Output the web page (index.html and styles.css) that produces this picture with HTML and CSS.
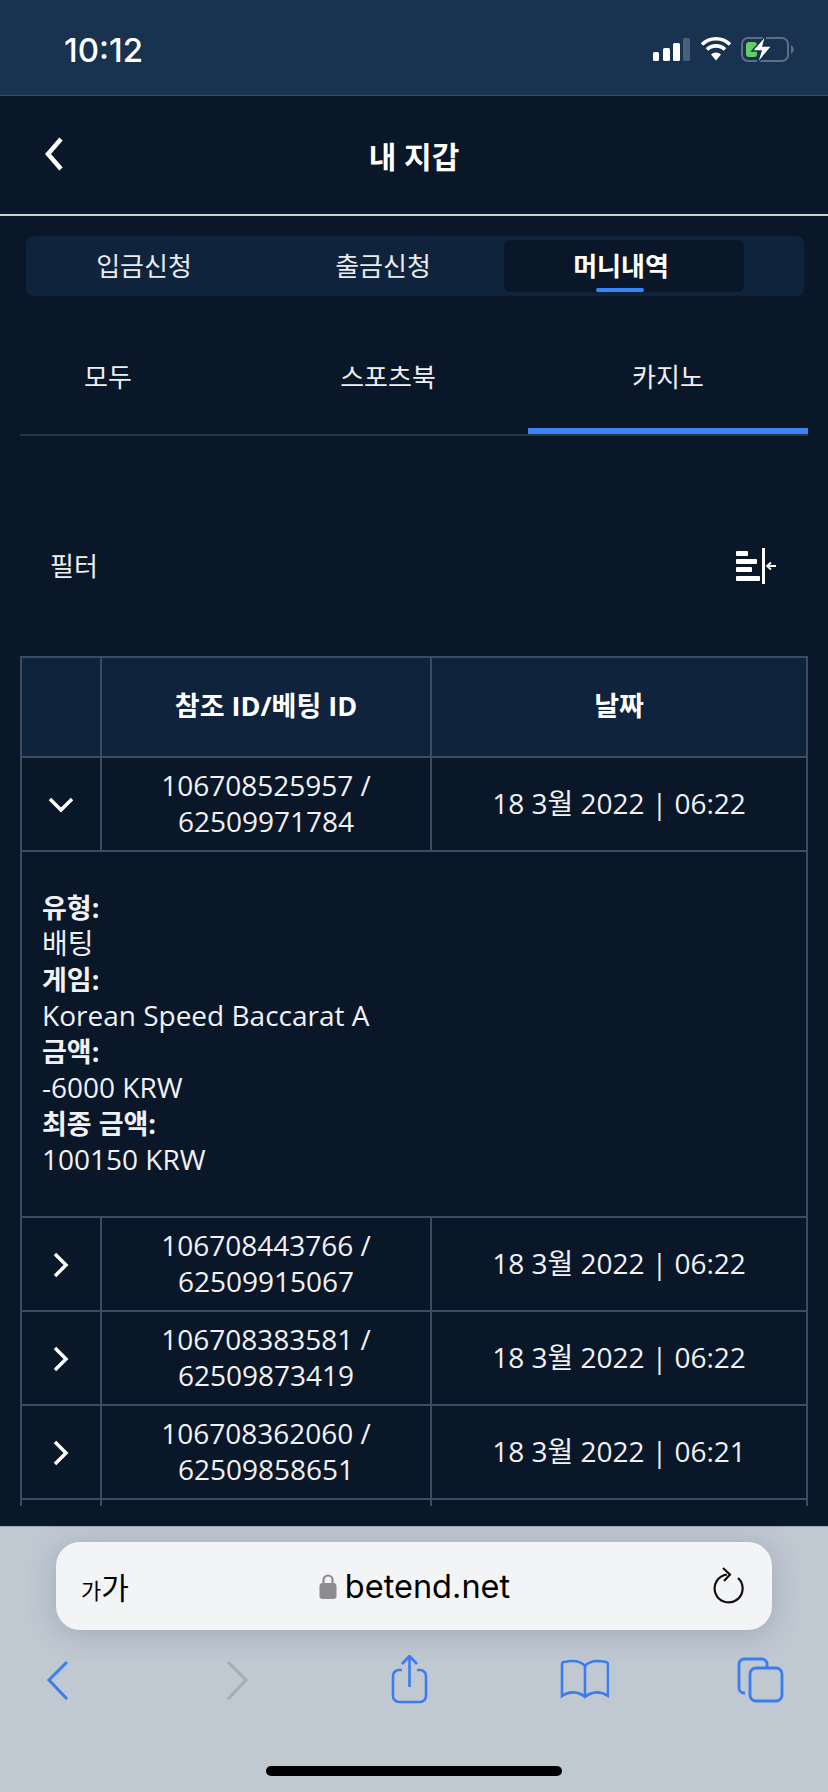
FILE: index.html
```html
<!DOCTYPE html>
<html lang="ko">
<head>
  <meta charset="UTF-8" />
  <meta name="viewport" content="width=device-width, initial-scale=1.0" />
  <title>내 지갑</title>
  <link rel="stylesheet" href="styles.css">
</head>
<body>
  <div class="screen">
    <div class="status-bar">
      <span class="time">10:12</span>
      <svg class="status-icons" width="144" height="30" viewBox="650 35 144 30">
        <rect x="653" y="52" width="6" height="9" rx="1.5" fill="#fff"/>
        <rect x="663" y="48" width="7" height="13" rx="1.5" fill="#fff"/>
        <rect x="673" y="43" width="7" height="18" rx="1.5" fill="#fff"/>
        <rect x="683" y="38" width="7" height="23" rx="1.5" fill="#4a5f78"/>
        <path d="M702 44.5a20 20 0 0 1 28 0M707 49.5a13 13 0 0 1 18 0" fill="none" stroke="#fff" stroke-width="3.6"/>
        <path d="M711 54.5a7 7 0 0 1 10 0L716 60.5z" fill="#fff"/>
        <rect x="742" y="38" width="46" height="23" rx="6" fill="none" stroke="#5d6f84" stroke-width="2"/>
        <path d="M791 45a5 5 0 0 1 0 9z" fill="#5d6f84"/>
        <rect x="746" y="42" width="11" height="15" rx="3" fill="#63cf62"/>
        <path d="M766 35L752 51h9l-4 13 15-18h-9z" fill="#fff" stroke="#19324f" stroke-width="1.500"/>
      </svg>
    </div>

    <header class="page-header">
      <svg class="back-icon" width="24" height="36" viewBox="0 0 24 36">
        <path d="M19 3L6 18l13 15" fill="none" stroke="#fff" stroke-width="4.500"/>
      </svg>
      <h1>내 지갑</h1>
    </header>

    <main class="wallet">
      <div class="sub-tabs">
        <a class="sub-tab">입금신청</a>
        <a class="sub-tab">출금신청</a>
        <a class="sub-tab active">머니내역</a>
      </div>

      <div class="cat-tabs">
        <a class="cat-tab first">모두</a>
        <a class="cat-tab">스포츠북</a>
        <a class="cat-tab active">카지노</a>
      </div>

      <div class="filter-row">
        <span>필터</span>
        <svg width="44" height="38" viewBox="0 0 44 38">
          <rect x="0" y="3" width="12" height="5" rx="1" fill="#fff"/>
          <rect x="0" y="11" width="21" height="5" rx="1" fill="#fff"/>
          <rect x="0" y="19" width="16" height="5" rx="1" fill="#fff"/>
          <rect x="0" y="28" width="24" height="5" rx="1" fill="#fff"/>
          <rect x="26" y="0" width="3" height="36" fill="#fff"/>
          <path d="M31 18h9M35 14.500l-4 3.500 4 3.500" fill="none" stroke="#fff" stroke-width="1.800"/>
        </svg>
      </div>

      <div class="table-wrap">
        <table>
          <colgroup>
            <col class="col-toggle" />
            <col class="col-id" />
            <col class="col-date" />
          </colgroup>
          <thead>
            <tr>
              <th></th>
              <th>참조 ID/베팅 ID</th>
              <th>날짜</th>
            </tr>
          </thead>
          <tbody>
            <tr>
              <td>
                <svg class="toggle" width="30" height="30" viewBox="0 0 30 30"><path d="M4 9l11 11 11-11" fill="none" stroke="#fff" stroke-width="3.500"/></svg>
              </td>
              <td>106708525957 /<br>62509971784</td>
              <td>18 3월 2022 | 06:22</td>
            </tr>
            <tr>
              <td colspan="3" class="detail">
                <b>유형:</b><br>배팅<br>
                <b>게임:</b><br>Korean Speed Baccarat A<br>
                <b>금액:</b><br>-6000 KRW<br>
                <b>최종 금액:</b><br>100150 KRW
              </td>
            </tr>
            <tr>
              <td>
                <svg class="toggle" width="30" height="30" viewBox="0 0 30 30"><path d="M9 4l11 11-11 11" fill="none" stroke="#fff" stroke-width="3.500"/></svg>
              </td>
              <td>106708443766 /<br>62509915067</td>
              <td>18 3월 2022 | 06:22</td>
            </tr>
            <tr>
              <td>
                <svg class="toggle" width="30" height="30" viewBox="0 0 30 30"><path d="M9 4l11 11-11 11" fill="none" stroke="#fff" stroke-width="3.500"/></svg>
              </td>
              <td>106708383581 /<br>62509873419</td>
              <td>18 3월 2022 | 06:22</td>
            </tr>
            <tr>
              <td>
                <svg class="toggle" width="30" height="30" viewBox="0 0 30 30"><path d="M9 4l11 11-11 11" fill="none" stroke="#fff" stroke-width="3.500"/></svg>
              </td>
              <td>106708362060 /<br>62509858651</td>
              <td>18 3월 2022 | 06:21</td>
            </tr>
            <tr>
              <td class="cut-row"></td>
              <td></td>
              <td></td>
            </tr>
          </tbody>
        </table>
      </div>
    </main>

    <div class="safari-bar">
      <div class="url-bar">
        <span class="aa"><small>가</small>가</span>
        <span class="address">
          <svg width="18" height="26" viewBox="0 0 18 26">
            <path d="M4.500 11V7a4.500 4.500 0 0 1 9 0v4" fill="none" stroke="#8c8c91" stroke-width="2.200"/>
            <rect x="0.500" y="10" width="17" height="16" rx="3" fill="#8c8c91"/>
          </svg>
          betend.net
        </span>
        <svg class="reload" width="32" height="38" viewBox="0 0 32 38">
          <path d="M15 7.500A14 14 0 1 0 26 11" fill="none" stroke="#111" stroke-width="2.200"/>
          <path d="M11 1l7 6.500-6 6.500" fill="none" stroke="#111" stroke-width="2.200"/>
        </svg>
      </div>
      <nav class="safari-nav">
        <svg width="50" height="50" viewBox="0 0 50 50">
          <path d="M35 7L17 25l18 19" fill="none" stroke="#3a7df0" stroke-width="3"/>
        </svg>
        <svg width="50" height="50" viewBox="0 0 50 50">
          <path d="M20 7l18 18-18 19" fill="none" stroke="#a6acb4" stroke-width="3"/>
        </svg>
        <svg width="50" height="50" viewBox="0 0 50 50">
          <path d="M18 15h-3a6 6 0 0 0-6 6v20a6 6 0 0 0 6 6h21a6 6 0 0 0 6-6V21a6 6 0 0 0-6-6h-3M25.500 32V2M18 9l7.500-8 7.500 8" fill="none" stroke="#3a7df0" stroke-width="2.600"/>
        </svg>
        <svg width="50" height="50" viewBox="0 0 50 50">
          <path d="M26 11C22 6 14 5 5 7c-1 0-2 1-2 3v31c7-5 16-5 23 1 7-6 16-6 23-1V10c0-2-1-3-2-3-9-2-17-1-21 4zM26 11v31" fill="none" stroke="#3a7df0" stroke-width="2.600"/>
        </svg>
        <svg width="50" height="50" viewBox="0 0 50 50">
          <path d="M10 38H9a5 5 0 0 1-5-5V9a5 5 0 0 1 5-5h18a5 5 0 0 1 5 5v3" fill="none" stroke="#3a7df0" stroke-width="2.800"/>
          <rect x="15" y="13" width="32" height="33" rx="6" fill="none" stroke="#3a7df0" stroke-width="2.800"/>
        </svg>
      </nav>
      <div class="home-bar"></div>
    </div>
  </div>
</body>
</html>
```

FILE: styles.css
```css
/* General Styles */
html, body {
  margin: 0;
  padding: 0;
  background-color: #0a1728;
}

body {
  font-family: "Open Sans", "Noto Sans CJK KR", sans-serif;
  color: #fff;
}

.screen {
  width: 828px;
  height: 1792px;
  display: flex;
  flex-direction: column;
  overflow: hidden;
}

/* Status bar */
.status-bar {
  height: 95px;
  flex: none;
  display: flex;
  align-items: flex-start;
  justify-content: space-between;
  background-color: #19324f;
  border-bottom: 1px solid #3a4c60;
}

.time {
  margin: 30px 0 0 64px;
  font-family: Inter, sans-serif;
  font-size: 33px;
  line-height: 40px;
  font-weight: 500;
}

.status-icons {
  margin: 35px 34px 0 0;
}

/* Page header */
.page-header {
  height: 118px;
  flex: none;
  display: flex;
  align-items: center;
  justify-content: center;
  position: relative;
  border-bottom: 2px solid #cfd0d2;
}

.page-header h1 {
  margin: 0;
  font-size: 30px;
  font-weight: 700;
}

.back-icon {
  position: absolute;
  left: 42px;
  top: 40px;
}

/* Wallet */
.wallet {
  flex: 1;
  min-height: 0;
}

.sub-tabs {
  margin: 20px 24px 0 26px;
  height: 52px;
  padding: 4px 0;
  display: grid;
  grid-template-columns: 236px 240px 240px;
  column-gap: 1px;
  background-color: #10233d;
  border-radius: 8px;
}

.sub-tab {
  display: flex;
  align-items: center;
  justify-content: center;
  position: relative;
  padding-bottom: 2px;
  font-size: 26px;
  color: #e8ebef;
  border-radius: 6px;
}

.sub-tab.active {
  padding-right: 6px;
  background-color: #0a1728;
  color: #fff;
  font-weight: 700;
}

.sub-tab.active::after {
  content: "";
  position: absolute;
  left: 92px;
  bottom: 0;
  width: 48px;
  height: 4px;
  border-radius: 2px;
  background-color: #3a85f2;
}

.cat-tabs {
  margin: 20px 20px 0;
  display: flex;
  border-bottom: 2px solid #283545;
}

.cat-tab {
  width: 280px;
  height: 118px;
  box-sizing: border-box;
  padding-top: 8px;
  display: flex;
  align-items: center;
  justify-content: center;
  font-size: 26px;
  color: #eef0f3;
  border-bottom: 6px solid transparent;
}

.cat-tab.first {
  width: 228px;
  padding-right: 52px;
}

.cat-tab.active {
  border-bottom-color: #3a85f2;
}

.filter-row {
  margin: 60px 48px 22px 50px;
  height: 138px;
  display: flex;
  align-items: center;
  justify-content: space-between;
  font-size: 26px;
  color: #eef0f3;
}

.filter-row svg {
  margin-top: 4px;
}

/* Table Styles */
.table-wrap {
  margin: 0 20px;
  height: 850px;
  overflow: hidden;
}

table {
  width: 788px;
  table-layout: fixed;
  border-collapse: collapse;
}

.col-toggle {
  width: 80px;
}

.col-id {
  width: 330px;
}

th, td {
  border: 2px solid #3c4d63;
  text-align: center;
  font-size: 28px;
  line-height: 36px;
  color: #f0f2f5;
  padding: 9px 10px 11px;
  font-weight: 400;
}

th {
  height: 78px;
  font-size: 27px;
  font-weight: 700;
  color: #fff;
  background-color: #10233d;
}

td .toggle {
  display: block;
  margin: 3px auto 0 auto;
}

td.detail {
  text-align: left;
  padding: 37px 20px 39px;
}

td.detail b {
  font-size: 27px;
  line-height: 1;
}

td.cut-row {
  height: 72px;
}

/* Safari toolbar */
.safari-bar {
  height: 266px;
  flex: none;
  box-sizing: border-box;
  border-top: 1px solid #9ca5b0;
  background-color: #c0c8d2;
  padding-top: 15px;
}

.url-bar {
  margin: 0 56px;
  height: 88px;
  padding: 0 28px 0 25px;
  display: grid;
  grid-template-columns: 1fr auto 1fr;
  align-items: center;
  background-color: #f3f4f6;
  border-radius: 24px;
  box-shadow: 0 4px 28px rgba(90, 100, 115, 0.3);
  color: #000;
}

.aa {
  font-size: 30px;
}

.aa small {
  font-size: 22px;
}

.address {
  display: flex;
  align-items: center;
  gap: 8px;
  margin-left: 4px;
  font-family: Inter, sans-serif;
  font-size: 32.5px;
}

.reload {
  justify-self: end;
}

.safari-nav {
  margin-top: 25px;
  padding: 0 43px 0 32px;
  display: flex;
  justify-content: space-between;
}

.home-bar {
  width: 296px;
  height: 10px;
  margin: 61px auto 0 auto;
  background-color: #000;
  border-radius: 5px;
}
```
